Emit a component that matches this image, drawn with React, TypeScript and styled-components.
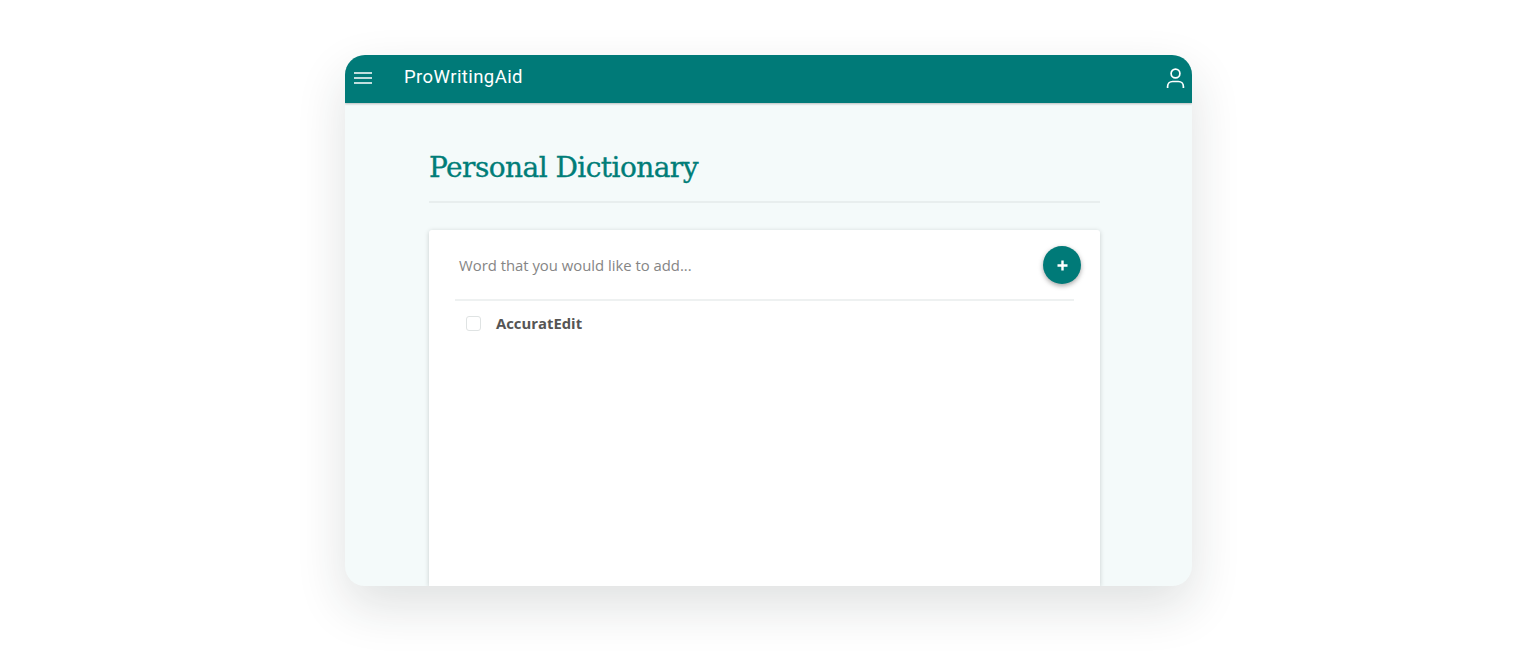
import styled, { createGlobalStyle } from 'styled-components';

const GlobalStyle = createGlobalStyle`
  html, body {
    margin: 0;
    height: 100%;
    background: #ffffff;
    overflow: hidden;
  }
`;

const Page = styled.div`
  width: 100vw;
  height: 661px;
  display: flex;
  justify-content: center;
  align-items: flex-start;
  box-sizing: border-box;
  padding: 55px 0 0 1px;
`;

const Window = styled.div`
  width: 847px;
  height: 531px;
  border-radius: 20px;
  background: #f4fafa;
  overflow: hidden;
  display: flex;
  flex-direction: column;
  box-shadow: 0 20px 50px rgba(30, 40, 40, 0.14);
`;

const Header = styled.header`
  height: 48px;
  flex: none;
  box-sizing: border-box;
  background: #007a78;
  box-shadow: 0 1px 2px rgba(0, 0, 0, 0.25);
  display: flex;
  align-items: center;
  padding: 0 7px 2px 9px;
  color: #ffffff;
`;

const MenuIcon = styled.svg`
  width: 18px;
  height: 14px;
  flex: none;
`;

const Brand = styled.div`
  margin: 0 0 2px 32px;
  flex: 1;
  font: 400 18.5px Roboto, "Liberation Sans", sans-serif;
  letter-spacing: 0.42px;
`;

const UserIcon = styled.svg`
  width: 19px;
  height: 21px;
  flex: none;
`;

const Content = styled.main`
  flex: 1;
  min-height: 0;
  padding: 0 92px 0 84px;
  display: flex;
  flex-direction: column;
`;

const Title = styled.h1`
  margin: 0;
  height: 100px;
  box-sizing: border-box;
  padding-top: 46px;
  border-bottom: 2px solid #e8eeee;
  color: #007d78;
  font: 400 28px/38px "DejaVu Serif", serif;
  letter-spacing: -0.55px;
  -webkit-text-stroke: 0.35px #007d78;
`;

const Card = styled.section`
  margin-top: 27px;
  flex: 1;
  background: #ffffff;
  border-radius: 3px 3px 0 0;
  box-shadow: 0 1px 5px rgba(0, 0, 0, 0.18);
  padding: 0 26px;
`;

const AddRow = styled.div`
  height: 69px;
  border-bottom: 2px solid #eef1f1;
  display: flex;
  align-items: center;
  justify-content: space-between;
  padding-left: 4px;
  position: relative;
`;

const Placeholder = styled.span`
  font: 400 14.85px "Open Sans", sans-serif;
  color: #858585;
`;

const AddButton = styled.button`
  position: absolute;
  right: -7px;
  top: 16px;
  width: 38px;
  height: 38px;
  padding: 0;
  border: 0;
  border-radius: 50%;
  background: #007a78;
  box-shadow: 0 2px 5px rgba(0, 0, 0, 0.35);
  display: flex;
  align-items: center;
  justify-content: center;
`;

const WordRow = styled.div`
  display: flex;
  align-items: center;
  gap: 15px;
  padding: 12px 0 0 11px;
`;

const CheckBox = styled.span`
  width: 13px;
  height: 13px;
  border: 1px solid #dfe3e3;
  border-radius: 3px;
  background: #fff;
`;

const Word = styled.span`
  font: 700 14.85px/20px "Open Sans", sans-serif;
  color: #555555;
`;

export default function App() {
  return (
    <>
      <GlobalStyle />
      <Page>
        <Window>
          <Header>
            <MenuIcon viewBox="0 0 18 14">
              <path d="M0 2h18M0 7h18M0 12h18" stroke="#fff" strokeWidth="1.7" />
            </MenuIcon>
            <Brand>ProWritingAid</Brand>
            <UserIcon viewBox="0 0 19 21" fill="none" stroke="#fff" strokeWidth="1.7">
              <circle cx="9.5" cy="5.5" r="4.4" />
              <path d="M1.6 20v-1.5c0-3 2.2-5 5-5h5.8c2.8 0 5 2 5 5V20" />
            </UserIcon>
          </Header>
          <Content>
            <Title>Personal Dictionary</Title>
            <Card>
              <AddRow>
                <Placeholder>Word that you would like to add...</Placeholder>
                <AddButton aria-label="Add word">
                  <svg width="11" height="11" viewBox="0 0 11 11">
                    <path d="M5.5 0.5v10M0.5 5.5h10" stroke="#fff" strokeWidth="2.4" />
                  </svg>
                </AddButton>
              </AddRow>
              <WordRow>
                <CheckBox />
                <Word>AccuratEdit</Word>
              </WordRow>
            </Card>
          </Content>
        </Window>
      </Page>
    </>
  );
}
